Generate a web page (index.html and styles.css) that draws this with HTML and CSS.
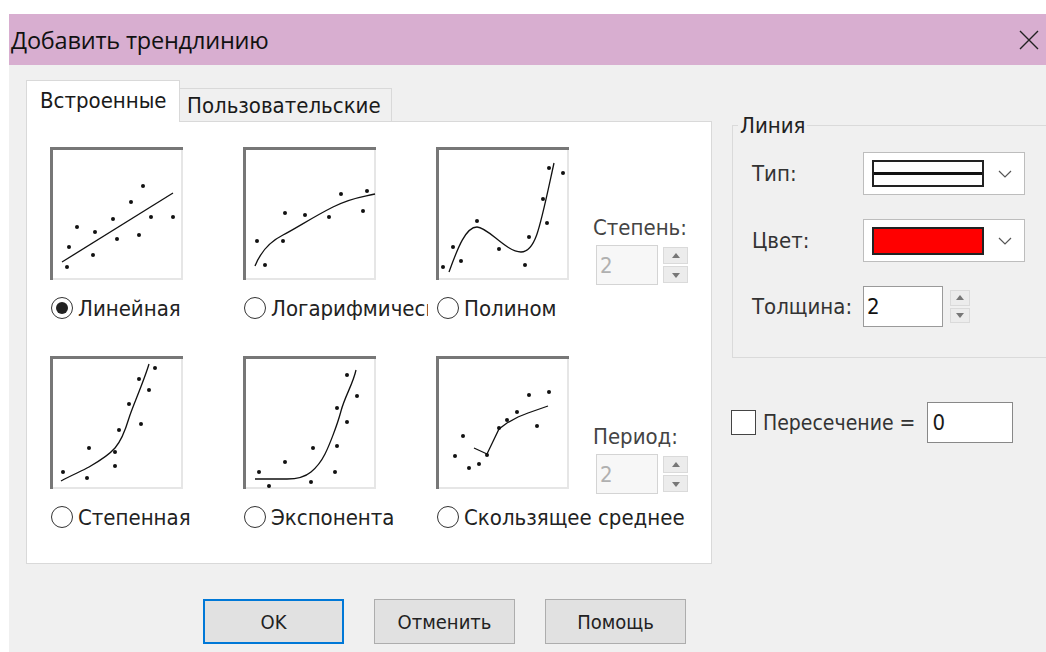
FILE: index.html
```html
<!DOCTYPE html>
<html lang="ru">
<head>
<meta charset="utf-8">
<title>Добавить трендлинию</title>
<link rel="stylesheet" href="styles.css">
</head>
<body>
<div class="window">
  <div class="titlebar">
    <span class="title">Добавить трендлинию</span>
    <svg class="close" width="20" height="20" viewBox="0 0 20 20"><path d="M1 1L19 19M19 1L1 19" stroke="#222" stroke-width="1.4" fill="none"/></svg>
  </div>
  <div class="content">
    <div class="main">
      <div class="tabs-col">
        <div class="tabstrip">
          <div class="tab active">Встроенные</div>
          <div class="tab">Пользовательские</div>
        </div>
        <div class="panel">
          <div class="trow">
            <div class="cell">
              <svg class="chart" width="133" height="133" viewBox="0 0 133 133">
                <rect x="1.5" y="1.5" width="130" height="130" fill="#fff"/>
                <path d="M1.5 133V1.5H133" stroke="#777" stroke-width="3" fill="none"/>
                <path d="M3 132H132V3" stroke="#e6e6e6" stroke-width="2" fill="none"/>
                <path d="M12 115L123 46" stroke="#111" stroke-width="1.3" fill="none"/>
                <g fill="#111"><circle cx="17" cy="120" r="2"/><circle cx="19" cy="100" r="2"/><circle cx="27" cy="80" r="2"/><circle cx="43" cy="108" r="2"/><circle cx="45" cy="85" r="2"/><circle cx="63" cy="72" r="2"/><circle cx="67" cy="92" r="2"/><circle cx="81" cy="55" r="2"/><circle cx="89" cy="88" r="2"/><circle cx="93" cy="39" r="2"/><circle cx="101" cy="70" r="2"/><circle cx="123" cy="70" r="2"/></g>
              </svg>
              <label class="radio"><span class="rb checked"></span><span class="rl">Линейная</span></label>
            </div>
            <div class="cell">
              <svg class="chart" width="133" height="133" viewBox="0 0 133 133">
                <rect x="1.5" y="1.5" width="130" height="130" fill="#fff"/>
                <path d="M1.5 133V1.5H133" stroke="#777" stroke-width="3" fill="none"/>
                <path d="M3 132H132V3" stroke="#e6e6e6" stroke-width="2" fill="none"/>
                <path d="M12 119C18 104 28 94 40 88S70 70 90 60S120 50 132 47" stroke="#111" stroke-width="1.3" fill="none"/>
                <g fill="#111"><circle cx="14" cy="94" r="2"/><circle cx="22" cy="118" r="2"/><circle cx="40" cy="94" r="2"/><circle cx="42" cy="66" r="2"/><circle cx="62" cy="68" r="2"/><circle cx="86" cy="70" r="2"/><circle cx="98" cy="47" r="2"/><circle cx="120" cy="64" r="2"/><circle cx="124" cy="44" r="2"/></g>
              </svg>
              <label class="radio clip"><span class="rb"></span><span class="rl">Логарифмическая</span></label>
            </div>
            <div class="cell">
              <svg class="chart" width="133" height="133" viewBox="0 0 133 133">
                <rect x="1.5" y="1.5" width="130" height="130" fill="#fff"/>
                <path d="M1.5 133V1.5H133" stroke="#777" stroke-width="3" fill="none"/>
                <path d="M3 132H132V3" stroke="#e6e6e6" stroke-width="2" fill="none"/>
                <path d="M13 125C22 100 30 80 41 80S70 105 85 105S104 80 118 16" stroke="#111" stroke-width="1.3" fill="none"/>
                <g fill="#111"><circle cx="7" cy="120" r="2"/><circle cx="17" cy="100" r="2"/><circle cx="25" cy="114" r="2"/><circle cx="41" cy="74" r="2"/><circle cx="63" cy="102" r="2"/><circle cx="89" cy="118" r="2"/><circle cx="93" cy="90" r="2"/><circle cx="107" cy="52" r="2"/><circle cx="111" cy="76" r="2"/><circle cx="113" cy="21" r="2"/><circle cx="127" cy="26" r="2"/></g>
              </svg>
              <label class="radio"><span class="rb"></span><span class="rl">Полином</span></label>
            </div>
            <div class="param">
              <span class="plabel">Степень:</span>
              <div class="spin disabled">
                <span class="sbox">2</span>
                <span class="sbtns"><span class="up"></span><span class="down"></span></span>
              </div>
            </div>
          </div>
          <div class="trow">
            <div class="cell">
              <svg class="chart" width="133" height="133" viewBox="0 0 133 133">
                <rect x="1.5" y="1.5" width="130" height="130" fill="#fff"/>
                <path d="M1.5 133V1.5H133" stroke="#777" stroke-width="3" fill="none"/>
                <path d="M3 132H132V3" stroke="#e6e6e6" stroke-width="2" fill="none"/>
                <path d="M11 125C22 119 32 115 39 111S58 100 65 92S76 72 79 62S94 25 99 8" stroke="#111" stroke-width="1.3" fill="none"/>
                <g fill="#111"><circle cx="13" cy="116" r="2"/><circle cx="37" cy="122" r="2"/><circle cx="39" cy="92" r="2"/><circle cx="65" cy="96" r="2"/><circle cx="65" cy="110" r="2"/><circle cx="69" cy="74" r="2"/><circle cx="79" cy="48" r="2"/><circle cx="91" cy="68" r="2"/><circle cx="89" cy="23" r="2"/><circle cx="99" cy="34" r="2"/><circle cx="105" cy="12" r="2"/></g>
              </svg>
              <label class="radio"><span class="rb"></span><span class="rl">Степенная</span></label>
            </div>
            <div class="cell">
              <svg class="chart" width="133" height="133" viewBox="0 0 133 133">
                <rect x="1.5" y="1.5" width="130" height="130" fill="#fff"/>
                <path d="M1.5 133V1.5H133" stroke="#777" stroke-width="3" fill="none"/>
                <path d="M3 132H132V3" stroke="#e6e6e6" stroke-width="2" fill="none"/>
                <path d="M12 123H44C54 123 62 121 68 116S78 106 82 98S94 70 98 55S110 28 113 14" stroke="#111" stroke-width="1.3" fill="none"/>
                <g fill="#111"><circle cx="16" cy="116" r="2"/><circle cx="26" cy="130" r="2"/><circle cx="42" cy="106" r="2"/><circle cx="68" cy="126" r="2"/><circle cx="70" cy="92" r="2"/><circle cx="92" cy="116" r="2"/><circle cx="94" cy="90" r="2"/><circle cx="94" cy="52" r="2"/><circle cx="104" cy="66" r="2"/><circle cx="104" cy="19" r="2"/><circle cx="114" cy="40" r="2"/></g>
              </svg>
              <label class="radio"><span class="rb"></span><span class="rl">Экспонента</span></label>
            </div>
            <div class="cell">
              <svg class="chart" width="133" height="133" viewBox="0 0 133 133">
                <rect x="1.5" y="1.5" width="130" height="130" fill="#fff"/>
                <path d="M1.5 133V1.5H133" stroke="#777" stroke-width="3" fill="none"/>
                <path d="M3 132H132V3" stroke="#e6e6e6" stroke-width="2" fill="none"/>
                <path d="M38 92L51 98L63 73L71 67L82 61L92 57L112 50" stroke="#111" stroke-width="1.3" fill="none"/>
                <g fill="#111"><circle cx="19" cy="100" r="2"/><circle cx="27" cy="80" r="2"/><circle cx="33" cy="112" r="2"/><circle cx="43" cy="108" r="2"/><circle cx="51" cy="99" r="2"/><circle cx="63" cy="72" r="2"/><circle cx="71" cy="64" r="2"/><circle cx="81" cy="56" r="2"/><circle cx="93" cy="39" r="2"/><circle cx="101" cy="70" r="2"/><circle cx="113" cy="36" r="2"/></g>
              </svg>
              <label class="radio wide"><span class="rb"></span><span class="rl">Скользящее среднее</span></label>
            </div>
            <div class="param">
              <span class="plabel">Период:</span>
              <div class="spin disabled">
                <span class="sbox">2</span>
                <span class="sbtns"><span class="up"></span><span class="down"></span></span>
              </div>
            </div>
          </div>
        </div>
      </div>
      <div class="side">
        <fieldset class="group">
          <legend>Линия</legend>
          <div class="frow">
            <span class="flabel">Тип:</span>
            <div class="combo">
              <span class="swatch line-style"><span></span></span>
              <svg class="chev" width="14" height="8" viewBox="0 0 14 8"><path d="M1 1L7 7L13 1" stroke="#555" stroke-width="1.2" fill="none"/></svg>
            </div>
          </div>
          <div class="frow">
            <span class="flabel">Цвет:</span>
            <div class="combo">
              <span class="swatch red"></span>
              <svg class="chev" width="14" height="8" viewBox="0 0 14 8"><path d="M1 1L7 7L13 1" stroke="#555" stroke-width="1.2" fill="none"/></svg>
            </div>
          </div>
          <div class="frow">
            <span class="flabel">Толщина:</span>
            <div class="spin thick">
              <span class="sbox">2</span>
              <span class="sbtns"><span class="up"></span><span class="down"></span></span>
            </div>
          </div>
        </fieldset>
        <div class="cross">
          <span class="check"></span>
          <span class="clabel">Пересечение =</span>
          <span class="cbox">0</span>
        </div>
      </div>
    </div>
    <div class="buttons">
      <button class="btn default">OK</button>
      <button class="btn">Отменить</button>
      <button class="btn">Помощь</button>
    </div>
  </div>
</div>
</body>
</html>
```

FILE: styles.css
```css
* { box-sizing: border-box; }

html, body {
  margin: 0;
  padding: 0;
  background: #fff;
  width: 1046px;
  height: 652px;
  overflow: hidden;
}

body {
  font-family: "DejaVu Sans Condensed", "Liberation Sans", sans-serif;
  font-size: 22px;
  color: #1a1a1a;
}

.window {
  margin: 14px 0 0 9px;
  height: 638px;
  display: flex;
  flex-direction: column;
}

.titlebar {
  height: 51px;
  background: #d8aed0;
  display: flex;
  align-items: center;
  justify-content: space-between;
  padding: 0 8px 0 2px;
}

.title {
  font-family: "Open Sans", "Liberation Sans", sans-serif;
  font-size: 23.5px;
  color: #111;
  letter-spacing: -0.2px;
}

.close { margin-right: -1px; }

.content {
  flex: 1;
  background: #f0f0f0;
  padding: 15px 0 0 17px;
  display: flex;
  flex-direction: column;
}

.main {
  display: flex;
  align-items: flex-start;
}

.tabs-col { width: 686px; }

.tabstrip {
  display: flex;
  align-items: flex-end;
  height: 41px;
  position: relative;
  z-index: 1;
}

.tab {
  border: 1px solid #d9d9d9;
  border-bottom: none;
  background: #f0f0f0;
  height: 33px;
  padding: 0 7px;
  display: flex;
  align-items: center;
}

.tab.active {
  background: #fff;
  width: 154px;
  padding: 0 0 2px 13px;
  margin-bottom: -1px;
  height: 42px;
}

.tab + .tab { border-left: none; width: 212px; }

.panel {
  background: #fff;
  border: 1px solid #d9d9d9;
  height: 443px;
  padding: 25px 0 0 23px;
}

.trow {
  display: flex;
  align-items: flex-start;
  height: 209px;
}

.cell {
  width: 193px;
  display: flex;
  flex-direction: column;
}

.chart { display: block; }

.radio {
  display: flex;
  align-items: center;
  height: 26px;
  margin-top: 15px;
  width: 190px;
  white-space: nowrap;
}

.radio.clip { width: 185px; overflow: hidden; }

.radio.wide { width: 260px; }

.rb {
  flex: none;
  width: 22px;
  height: 22px;
  border: 1.5px solid #333;
  border-radius: 50%;
  background: #fff;
  margin-left: 1px;
  margin-right: 5px;
  display: flex;
  align-items: center;
  justify-content: center;
}

.rb.checked::after {
  content: "";
  width: 12px;
  height: 12px;
  border-radius: 50%;
  background: #222;
}

.rl { color: #222; }

.param {
  margin-top: 68px;
  margin-left: -33px;
  display: flex;
  flex-direction: column;
}

.plabel { color: #444; margin-left: -3px; height: 26px; line-height: 26px; }

.spin {
  display: flex;
  align-items: stretch;
  margin-top: 4px;
}

.sbox {
  width: 62px;
  height: 40px;
  border: 1px solid #d4d4d4;
  background: #fff;
  padding-left: 3px;
  display: flex;
  align-items: center;
}

.spin.disabled .sbox { color: #b0b0b0; background: #f7f7f7; }

.sbtns {
  width: 25px;
  margin-left: 5px;
  display: flex;
  flex-direction: column;
  gap: 2px;
  padding: 2px 0;
}

.sbtns span {
  flex: 1;
  background: #ececec;
  border: 1px solid #dadada;
  position: relative;
}

.sbtns .up::after,
.sbtns .down::after {
  content: "";
  position: absolute;
  left: 50%;
  top: 50%;
  margin-left: -4px;
  border-left: 4px solid transparent;
  border-right: 4px solid transparent;
}

.sbtns .up::after { border-bottom: 5px solid #777; margin-top: -3px; }
.sbtns .down::after { border-top: 5px solid #777; margin-top: -2px; }

.side {
  margin-left: 20px;
  flex: 1;
}

.group {
  margin: 33px 0 0 0;
  border: 1px solid #dadada;
  border-right: none;
  padding: 14px 0 0 19px;
  height: 245px;
}

.group legend {
  padding: 0 2px;
  margin-left: -14px;
  color: #222;
}

.frow {
  display: flex;
  align-items: center;
  margin-bottom: 24px;
}

.flabel { width: 111px; color: #333; }

.combo {
  width: 162px;
  height: 43px;
  background: #fff;
  border: 1px solid #bdbdbd;
  display: flex;
  align-items: center;
  padding-left: 8px;
}

.swatch {
  width: 112px;
  height: 28px;
  border: 2px solid #222;
}

.swatch.red { background: #f00; }

.swatch.line-style {
  display: flex;
  align-items: center;
  background: #fff;
  height: 27px;
}

.swatch.line-style span {
  width: 100%;
  height: 3px;
  background: #111;
}

.chev { margin-left: 14px; }

.spin.thick { margin-top: 0; align-items: center; }

.spin.thick .sbox {
  width: 80px;
  height: 41px;
  border-color: #9a9a9a;
  color: #111;
}

.spin.thick .sbtns { height: 37px; margin-left: 7px; width: 20px; }

.cross {
  display: flex;
  align-items: center;
  margin-top: 44px;
  margin-left: -1px;
  font-size: 21px;
}

.check {
  width: 25px;
  height: 25px;
  border: 1.5px solid #444;
  background: #fff;
}

.clabel { margin-left: 7px; color: #333; }

.cbox {
  margin-left: 12px;
  width: 86px;
  height: 41px;
  background: #fff;
  border: 1px solid #888;
  padding-left: 4px;
  display: flex;
  align-items: center;
  font-size: 22px;
}

.buttons {
  display: flex;
  gap: 30px;
  margin: 35px 0 0 177px;
}

.btn {
  width: 141px;
  height: 45px;
  background: #e1e1e1;
  border: 1px solid #adadad;
  font-family: "DejaVu Sans Condensed", "Liberation Sans", sans-serif;
  font-size: 20px;
  color: #222;
  padding: 0;
}

.btn.default { border: 2px solid #0078d7; }
```
